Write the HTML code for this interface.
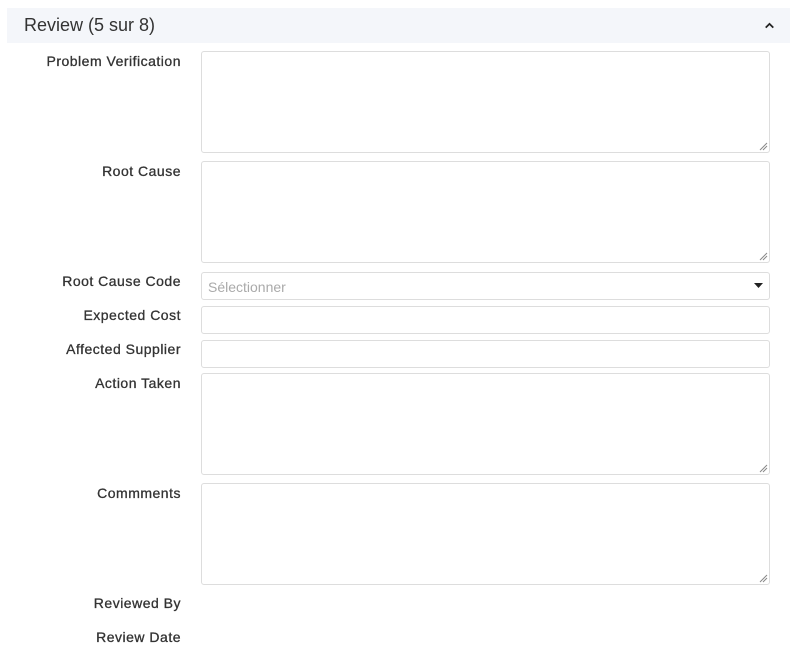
<!DOCTYPE html>
<html><head><style>
body{margin:0;background:#fff;font-family:"Liberation Sans",sans-serif;width:800px;height:662px;position:relative;overflow:hidden}
.hdr{position:absolute;left:7px;top:8px;width:783px;height:35px;background:#f4f6fa}
.hdr span{position:absolute;left:17px;top:7px;font-size:18px;color:#333}
.chev{position:absolute;left:756px;top:11px}
.l{position:absolute;right:619px;font-size:14px;color:#333;font-weight:normal;letter-spacing:0.5px;white-space:nowrap;-webkit-text-stroke:0.3px #333}
.b{position:absolute;left:201px;width:567px;border:1px solid #ddd;border-radius:3px;background:#fff}
.rz{position:absolute;right:1px;bottom:1px}
</style></head><body>
<div class="hdr"><span>Review (5 sur 8)</span>
<svg class="chev" width="13" height="13" viewBox="0 0 12 12"><path d="M2.5 8 L6 4.5 L9.5 8" stroke="#222" stroke-width="1.6" fill="none"/></svg></div>

<div class="l" style="top:53px">Problem Verification</div>
<div class="b" style="top:51px;height:100px"><svg class="rz" width="9" height="9"><path d="M1 8L8 1M4 8L8 4" stroke="#888" stroke-width="1"/></svg></div>
<div class="l" style="top:163px">Root Cause</div>
<div class="b" style="top:161px;height:100px"><svg class="rz" width="9" height="9"><path d="M1 8L8 1M4 8L8 4" stroke="#888" stroke-width="1"/></svg></div>
<div class="l" style="top:273px">Root Cause Code</div>
<div class="b" style="top:272px;height:26px"><span style="position:absolute;left:6px;top:6px;font-size:14px;color:#aaa">Sélectionner</span><svg style="position:absolute;right:6px;top:10px" width="9" height="6"><path d="M0 0H9L4.5 5Z" fill="#222"/></svg></div>
<div class="l" style="top:307px">Expected Cost</div>
<div class="b" style="top:306px;height:26px"></div>
<div class="l" style="top:341px">Affected Supplier</div>
<div class="b" style="top:340px;height:26px"></div>
<div class="l" style="top:375px">Action Taken</div>
<div class="b" style="top:373px;height:100px"><svg class="rz" width="9" height="9"><path d="M1 8L8 1M4 8L8 4" stroke="#888" stroke-width="1"/></svg></div>
<div class="l" style="top:485px">Commments</div>
<div class="b" style="top:483px;height:100px"><svg class="rz" width="9" height="9"><path d="M1 8L8 1M4 8L8 4" stroke="#888" stroke-width="1"/></svg></div>
<div class="l" style="top:595px">Reviewed By</div>
<div class="l" style="top:629px">Review Date</div>
</body></html>
